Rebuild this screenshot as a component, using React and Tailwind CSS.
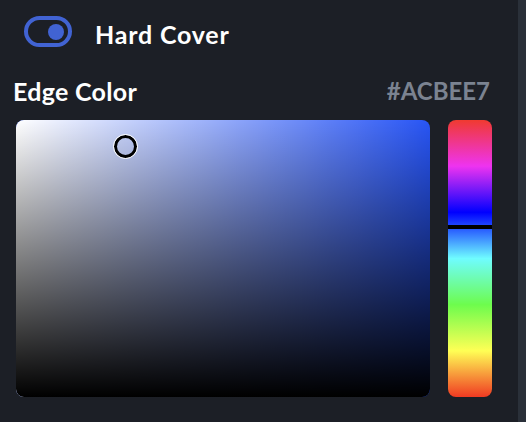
export default function App() {
  const font = { fontFamily: "Lato, 'Noto Sans', sans-serif" };
  return (
    <div className="w-[526px] h-[422px] bg-[#1c1f26] flex overflow-hidden" style={font}>
      <div className="w-[518px] h-full pl-[16px] pr-[26px] flex flex-col">
        <div className="flex items-center h-[31px] mt-[16px] ml-[8px]">
          <div className="w-[48px] h-[31px] rounded-full border-[4px] border-[#4163d3] flex items-center justify-end pr-[4px]">
            <div className="w-[16px] h-[16px] rounded-full bg-[#4163d3]" />
          </div>
          <span className="ml-[23px] mt-[6px] text-white font-bold text-[25px] tracking-[0.8px] leading-none">Hard Cover</span>
        </div>
        <div className="flex items-center justify-between mt-[32px] -ml-[3px] mr-[2px] h-[24px]">
          <span className="text-white font-bold text-[25px] tracking-[0.3px] leading-none">Edge Color</span>
          <span className="text-[#7b8391] font-bold text-[24px] leading-none">#ACBEE7</span>
        </div>
        <div className="flex mt-[17px] gap-[18px] h-[277px]">
          <div className="relative w-[414px] h-full rounded-[8px] overflow-hidden bg-[#2855f5]">
            <div className="absolute inset-0 bg-gradient-to-r from-white to-transparent" />
            <div className="absolute inset-0 bg-gradient-to-b from-transparent to-black" />
            <div className="absolute left-[98px] top-[15px] w-[23px] h-[23px] rounded-full border-[3px] border-black outline outline-1 outline-white" />
          </div>
          <div className="relative w-[44px] h-full rounded-[8px] overflow-hidden bg-[linear-gradient(to_bottom,#f03a30_0%,#ee33f0_16.67%,#0000ff_33.33%,#6ffcff_50%,#6dfc4d_66.67%,#ffff55_83.33%,#f03a22_100%)]">
            <div className="absolute left-0 right-0 top-[105px] h-[4px] bg-black" />
          </div>
        </div>
      </div>
      <div className="w-[8px] h-full bg-[#2a3039]" />
    </div>
  );
}
